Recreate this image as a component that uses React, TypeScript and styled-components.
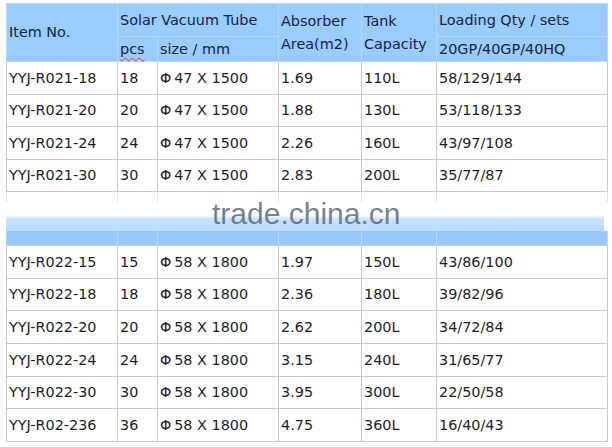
import React from 'react';
import styled, { createGlobalStyle } from 'styled-components';

const GlobalStyle = createGlobalStyle`
  body {
    margin: 0;
    background: #ffffff;
    font-family: "DejaVu Sans", Verdana, sans-serif;
  }
`;

const COLS = [111, 40, 121, 83, 75, 171];

const firstBatch = [
  ['YYJ-R021-18', '18', 'Φ\u200947 X 1500', '1.69', '110L', '58/129/144'],
  ['YYJ-R021-20', '20', 'Φ\u200947 X 1500', '1.88', '130L', '53/118/133'],
  ['YYJ-R021-24', '24', 'Φ\u200947 X 1500', '2.26', '160L', '43/97/108'],
  ['YYJ-R021-30', '30', 'Φ\u200947 X 1500', '2.83', '200L', '35/77/87'],
];

const secondBatch = [
  ['YYJ-R022-15', '15', 'Φ\u200958 X 1800', '1.97', '150L', '43/86/100'],
  ['YYJ-R022-18', '18', 'Φ\u200958 X 1800', '2.36', '180L', '39/82/96'],
  ['YYJ-R022-20', '20', 'Φ\u200958 X 1800', '2.62', '200L', '34/72/84'],
  ['YYJ-R022-24', '24', 'Φ\u200958 X 1800', '3.15', '240L', '31/65/77'],
  ['YYJ-R022-30', '30', 'Φ\u200958 X 1800', '3.95', '300L', '22/50/58'],
  ['YYJ-R02-236', '36', 'Φ\u200958 X 1800', '4.75', '360L', '16/40/43'],
];

const Page = styled.div`
  width: 601px;
  padding: 3px 0 0 6px;
`;

const SpecTable = styled.table`
  width: 601px;
  table-layout: fixed;
  border-collapse: collapse;
  font-size: 14.4px;
  color: #1e1e1e;
`;

const HeadCell = styled.th<{ $h: number }>`
  height: ${(p) => p.$h}px;
  padding: 0 0 0 2px;
  background: #99ccff;
  border: 1px solid #b4d8fb;
  color: #18233f;
  font-weight: normal;
  text-align: left;
  vertical-align: middle;
  line-height: 23px;
  white-space: nowrap;
`;

const Spell = styled.span`
  text-decoration: underline wavy #d83a3a;
  text-decoration-thickness: 1px;
  text-underline-offset: 3px;
`;

const Row = styled.tr<{ $h: number }>`
  height: ${(p) => p.$h}px;
`;

const Cell = styled.td`
  padding: 0 0 0 2px;
  border: 1px solid #cacaca;
  vertical-align: middle;
  white-space: nowrap;
  line-height: 18px;
`;

const StubCell = styled.td`
  height: 10px;
  padding: 0;
  border-left: 1px solid #e4e4e4;
  border-right: 1px solid #e4e4e4;
`;

const Seam = styled.div`
  position: relative;
  width: 601px;
`;

const Gap = styled.div`
  height: 13px;
`;

const LightBand = styled.div`
  height: 16px;
  margin-right: 3px;
  background: linear-gradient(to bottom, #ffffff 0px, #c9e3fd 4px, #b9dafb 16px);
`;

const BandCell = styled.td`
  height: 14px;
  padding: 0;
  background: #97c9f8;
  border-left: 1px solid #b4d8fb;
  border-right: 1px solid #b4d8fb;
`;

const Watermark = styled.div`
  position: absolute;
  left: 206px;
  top: -5px;
  font-family: "Liberation Sans", Arial, sans-serif;
  font-size: 30px;
  line-height: 34px;
  color: rgba(100, 112, 128, 0.88);
  white-space: nowrap;
`;

const Cols = () => (
  <colgroup>
    {COLS.map((w, i) => (
      <col key={i} style={{ width: w }} />
    ))}
  </colgroup>
);

const DataRows = ({ rows, h }: { rows: string[][]; h: number }) => (
  <>
    {rows.map((r) => (
      <Row key={r[0]} $h={h}>
        {r.map((v, i) => (
          <Cell key={i}>{v}</Cell>
        ))}
      </Row>
    ))}
  </>
);

export default function App() {
  return (
    <>
      <GlobalStyle />
      <Page>
        <SpecTable>
          <Cols />
          <thead>
            <tr>
              <HeadCell $h={32} rowSpan={2}>Item No.</HeadCell>
              <HeadCell $h={32} colSpan={2}>Solar Vacuum Tube</HeadCell>
              <HeadCell $h={32} rowSpan={2}>
                Absorber
                <br />
                Area(m2)
              </HeadCell>
              <HeadCell $h={32} rowSpan={2}>
                Tank
                <br />
                Capacity
              </HeadCell>
              <HeadCell $h={32}>Loading Qty / sets</HeadCell>
            </tr>
            <tr>
              <HeadCell $h={24}>
                <Spell>pcs</Spell>
              </HeadCell>
              <HeadCell $h={24}>size / mm</HeadCell>
              <HeadCell $h={24}>20GP/40GP/40HQ</HeadCell>
            </tr>
          </thead>
          <tbody>
            <DataRows rows={firstBatch} h={32.5} />
            <tr>
              {COLS.map((_, i) => (
                <StubCell key={i} />
              ))}
            </tr>
          </tbody>
        </SpecTable>
        <Seam>
          <Gap />
          <LightBand />
          <Watermark>trade.china.cn</Watermark>
        </Seam>
        <SpecTable>
          <Cols />
          <tbody>
            <tr>
              {COLS.map((_, i) => (
                <BandCell key={i} />
              ))}
            </tr>
            <DataRows rows={secondBatch} h={32.67} />
          </tbody>
        </SpecTable>
      </Page>
    </>
  );
}
